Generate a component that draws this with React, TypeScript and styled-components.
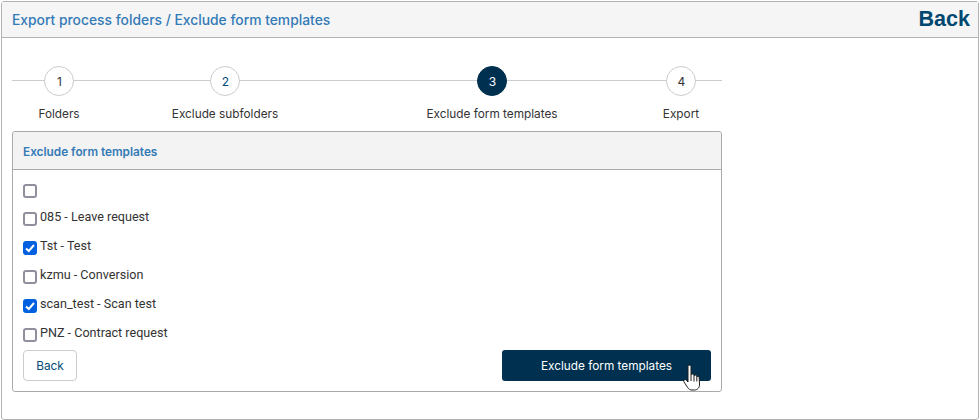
import styled, { createGlobalStyle } from "styled-components";

const Global = createGlobalStyle`
  html, body {
    margin: 0;
    padding: 0;
    background: #fff;
  }
  body {
    font-family: Inter, "Liberation Sans", sans-serif;
    font-size: 11.8px;
    color: #333;
  }
`;

const steps = [
  { no: 1, label: "Folders" },
  { no: 2, label: "Exclude subfolders", link: true },
  { no: 3, label: "Exclude form templates", active: true },
  { no: 4, label: "Export" },
];

const templates = [
  { label: "085 - Leave request", checked: false },
  { label: "Tst - Test", checked: true },
  { label: "kzmu - Conversion", checked: false },
  { label: "scan_test - Scan test", checked: true },
  { label: "PNZ - Contract request", checked: false },
];

const App = () => {
  return (
    <>
      <Global />
      <Frame>
        <TopBar>
          <Title>Export process folders / Exclude form templates</Title>
          <BackLink>Back</BackLink>
        </TopBar>
        <Content>
          <Stepper>
            {steps.map((s) => (
              <Step key={s.no}>
                <Circle $active={s.active} $link={s.link}>
                  {s.no}
                </Circle>
                <StepLabel>{s.label}</StepLabel>
              </Step>
            ))}
          </Stepper>
          <Panel>
            <PanelHeader>Exclude form templates</PanelHeader>
            <PanelBody>
              <List>
                <FirstRow>
                  <Box $checked={false} />
                </FirstRow>
                {templates.map((t) => (
                  <Row key={t.label}>
                    <Box $checked={t.checked}>
                      {t.checked && (
                        <svg width="12" height="12" viewBox="0 0 12 12">
                          <path
                            d="M2 6.400 4.800 9 10 3"
                            fill="none"
                            stroke="#fff"
                            strokeWidth="2"
                          />
                        </svg>
                      )}
                    </Box>
                    <RowText>{t.label}</RowText>
                  </Row>
                ))}
              </List>
              <Actions>
                <SecondaryButton>Back</SecondaryButton>
                <PrimaryButton>
                  Exclude form templates
                  <Cursor viewBox="0 0 17 27" width="17" height="27">
                    <path
                      d="M5 2.500C5 .8 8 .8 8 2.500V11c.3-1.300 2.700-1.300 3 0v1c.3-1.200 2.500-1.200 2.800.1v.9c.4-1 2.200-.8 2.400.6L16.500 20c.2 3.500-2 6-5 6H9c-2 0-3.200-.8-4.200-2.300L1 18c-1-1.700 1-3.200 2.400-1.800L5 18Z"
                      fill="#fff"
                      stroke="#1c1c1c"
                      strokeWidth="1"
                      strokeLinejoin="round"
                    />
                    <path d="M8 11v6M11 12v5.500M13.800 13v4.500" stroke="#1c1c1c" strokeWidth="1" fill="none" />
                  </Cursor>
                </PrimaryButton>
              </Actions>
            </PanelBody>
          </Panel>
        </Content>
      </Frame>
    </>
  );
};

const Frame = styled.div`
  box-sizing: border-box;
  width: 978px;
  height: 419px;
  margin: 1px 0 0 1px;
  border: 1px solid #b3b3b3;
  border-radius: 3px;
  background: #fff;
`;

const TopBar = styled.div`
  box-sizing: border-box;
  height: 36px;
  padding: 0 8px 0 10px;
  display: flex;
  align-items: center;
  justify-content: space-between;
  background: #f5f5f5;
  border-bottom: 1px solid #b3b3b3;
`;

const Title = styled.div`
  font-size: 13.85px;
  font-weight: 500;
  color: #337ab7;
`;

const BackLink = styled.div`
  font-family: "Liberation Sans", Arial, sans-serif;
  font-size: 21.5px;
  font-weight: bold;
  color: #00486f;
`;

const Content = styled.div`
  width: 710px;
  padding: 28px 0 0 10px;
`;

const Stepper = styled.div`
  position: relative;
  display: grid;
  grid-template-columns: 94px 238px 296px 82px;
  height: 65px;
  &::before {
    content: "";
    position: absolute;
    left: 0;
    right: 0;
    top: 14px;
    height: 1px;
    background: #ccc;
  }
`;

const Step = styled.div`
  position: relative;
  display: flex;
  flex-direction: column;
  align-items: center;
`;

const Circle = styled.div<{ $active?: boolean; $link?: boolean }>`
  box-sizing: border-box;
  width: 30px;
  height: 30px;
  padding-left: 1px;
  border-radius: 50%;
  display: flex;
  align-items: center;
  justify-content: center;
  font-size: 12px;
  border: 1px solid ${(p) => (p.$active ? "#00304f" : "#ccc")};
  background: ${(p) => (p.$active ? "#00304f" : "#fff")};
  color: ${(p) => (p.$active ? "#fff" : p.$link ? "#004a75" : "#333")};
`;

const StepLabel = styled.div`
  margin-top: 11px;
  font-size: 11.8px;
  line-height: 15px;
  white-space: nowrap;
  color: #333;
`;

const Panel = styled.div`
  box-sizing: border-box;
  width: 710px;
  height: 261px;
  border: 1px solid #aaa;
  border-radius: 3px;
`;

const PanelHeader = styled.div`
  box-sizing: border-box;
  height: 38px;
  padding: 2px 10px 0;
  display: flex;
  align-items: center;
  background: #f3f3f3;
  border-bottom: 1px solid #aaa;
  border-radius: 3px 3px 0 0;
  font-size: 11.8px;
  font-weight: 600;
  color: #337ab7;
`;

const PanelBody = styled.div`
  padding: 14px 10px 0;
`;

const List = styled.div`
  height: 166px;
  overflow: hidden;
`;

const FirstRow = styled.div`
  height: 28px;
`;

const Row = styled.div`
  display: flex;
  height: 29px;
  gap: 3px;
`;

const Box = styled.span<{ $checked: boolean }>`
  box-sizing: border-box;
  flex: none;
  width: 14px;
  height: 14px;
  display: flex;
  align-items: center;
  justify-content: center;
  border-radius: 3px;
  border: ${(p) => (p.$checked ? "none" : "2px solid #8f8f9d")};
  background: ${(p) => (p.$checked ? "#0060df" : "#fff")};
`;

const RowText = styled.span`
  font-family: Roboto, "Liberation Sans", sans-serif;
  font-size: 12.6px;
  line-height: 14px;
  margin-top: -2px;
`;

const Actions = styled.div`
  display: flex;
  justify-content: space-between;
`;

const SecondaryButton = styled.button`
  box-sizing: border-box;
  width: 54px;
  height: 31px;
  padding: 0;
  border: 1px solid #ccc;
  border-radius: 4px;
  background: #fff;
  font-family: inherit;
  font-size: 11.8px;
  color: #004a75;
`;

const PrimaryButton = styled.button`
  position: relative;
  box-sizing: border-box;
  width: 209px;
  height: 31px;
  padding: 0;
  border: none;
  border-radius: 3px;
  background: #00304f;
  font-family: inherit;
  font-size: 11.8px;
  color: #fff;
`;

const Cursor = styled.svg`
  position: absolute;
  left: 181px;
  top: 14px;
`;

export default App;
